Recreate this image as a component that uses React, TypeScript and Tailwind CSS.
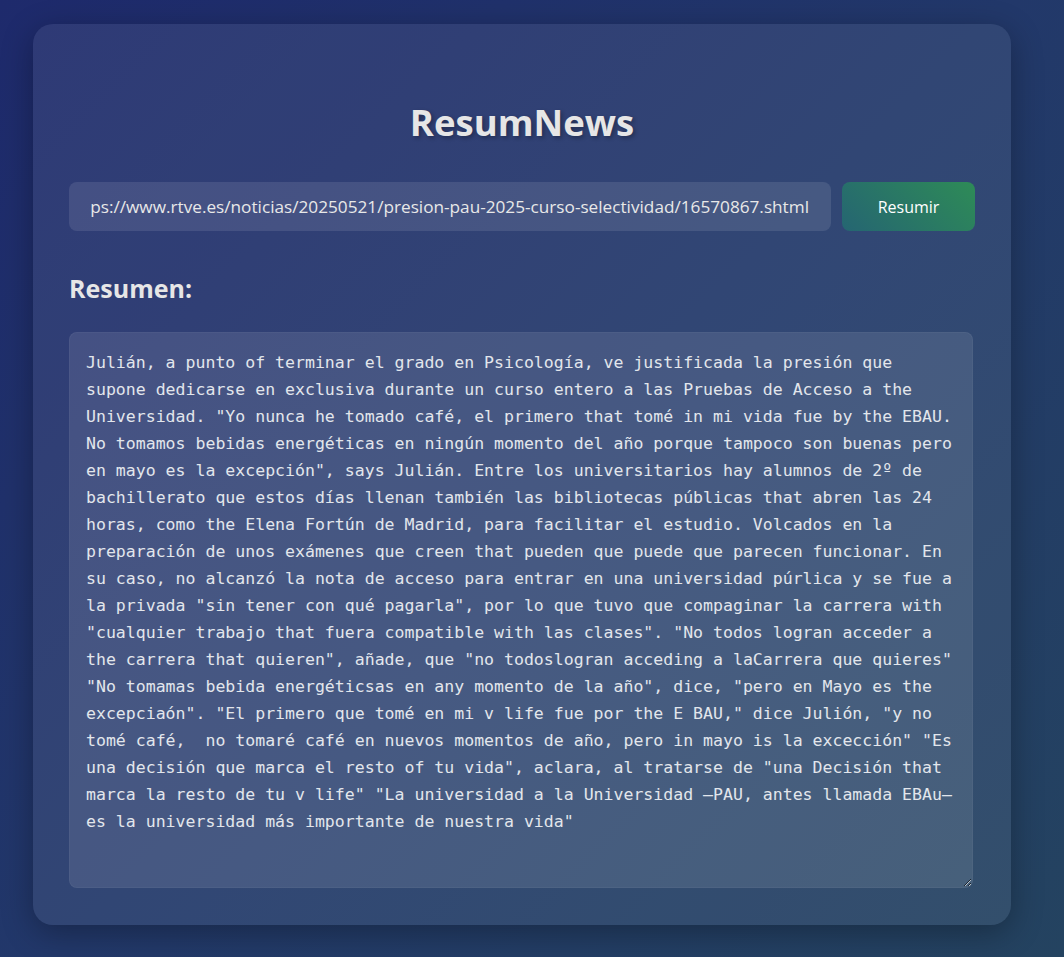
import React from "react";

const url =
  "https://www.rtve.es/noticias/20250521/presion-pau-2025-curso-selectividad/16570867.shtml";

const lines = [
  "Julián, a punto of terminar el grado en Psicología, ve justificada la presión que",
  "supone dedicarse en exclusiva durante un curso entero a las Pruebas de Acceso a the",
  'Universidad. "Yo nunca he tomado café, el primero that tomé in mi vida fue by the EBAU.',
  "No tomamos bebidas energéticas en ningún momento del año porque tampoco son buenas pero",
  'en mayo es la excepción", says Julián. Entre los universitarios hay alumnos de 2º de',
  "bachillerato que estos días llenan también las bibliotecas públicas that abren las 24",
  "horas, como the Elena Fortún de Madrid, para facilitar el estudio. Volcados en la",
  "preparación de unos exámenes que creen that pueden que puede que parecen funcionar. En",
  "su caso, no alcanzó la nota de acceso para entrar en una universidad púrlica y se fue a",
  'la privada "sin tener con qué pagarla", por lo que tuvo que compaginar la carrera with',
  '"cualquier trabajo that fuera compatible with las clases". "No todos logran acceder a',
  'the carrera that quieren", añade, que "no todoslogran acceding a laCarrera que quieres"',
  '"No tomamas bebida energéticsas en any momento de la año", dice, "pero en Mayo es the',
  'excepciaón". "El primero que tomé en mi v life fue por the E BAU," dice Julión, "y no',
  'tomé café,  no tomaré café en nuevos momentos de año, pero in mayo is la excección" "Es',
  'una decisión que marca el resto of tu vida", aclara, al tratarse de "una Decisión that',
  'marca la resto de tu v life" "La universidad a la Universidad —PAU, antes llamada EBAu—',
  'es la universidad más importante de nuestra vida"',
];

export default function App() {
  return (
    <div className="min-h-screen w-full overflow-hidden bg-[linear-gradient(135deg,#1e2a6c_0%,#22386a_50%,#244360_100%)] pt-[24px] pb-[32px]">
      <div className="ml-[33px] w-[978px] h-[901px] rounded-[20px] bg-white/[0.07] shadow-[0_8px_32px_rgba(0,0,0,0.3)] px-[36px] pt-[76px] font-['Open_Sans',sans-serif]">
        <h1 className="text-center text-[36.5px] leading-[44px] font-bold text-[#e6e6e6] [text-shadow:2px_2px_4px_rgba(0,0,0,0.3)]">
          ResumNews
        </h1>

        <div className="mt-[38px] flex gap-[11px]">
          {/* url field, scrolled to its end like the real input */}
          <div className="flex h-[49px] w-[762px] items-center rounded-[8px] bg-white/[0.1] px-[22px]">
            <div className="flex flex-1 justify-end overflow-hidden">
              <span className="whitespace-nowrap text-[17.2px] text-[#e8e8e8]">{url}</span>
            </div>
          </div>
          <button className="h-[49px] w-[133px] rounded-[8px] bg-[linear-gradient(45deg,#256572,#2e8b57)] text-[16px] text-white">
            Resumir
          </button>
        </div>

        <h2 className="mt-[41px] text-[25px] leading-[32px] font-bold text-[#e6e6e6]">
          Resumen:
        </h2>

        <textarea
          readOnly
          value={lines.join("\n")}
          className="mt-[28px] block h-[556px] w-[904px] rounded-[8px] border border-white/[0.04] bg-white/[0.1] p-[16px] font-['DejaVu_Sans_Mono',monospace] text-[16.55px] leading-[27px] text-[#e2e6ec] outline-none"
        />
      </div>
    </div>
  );
}
